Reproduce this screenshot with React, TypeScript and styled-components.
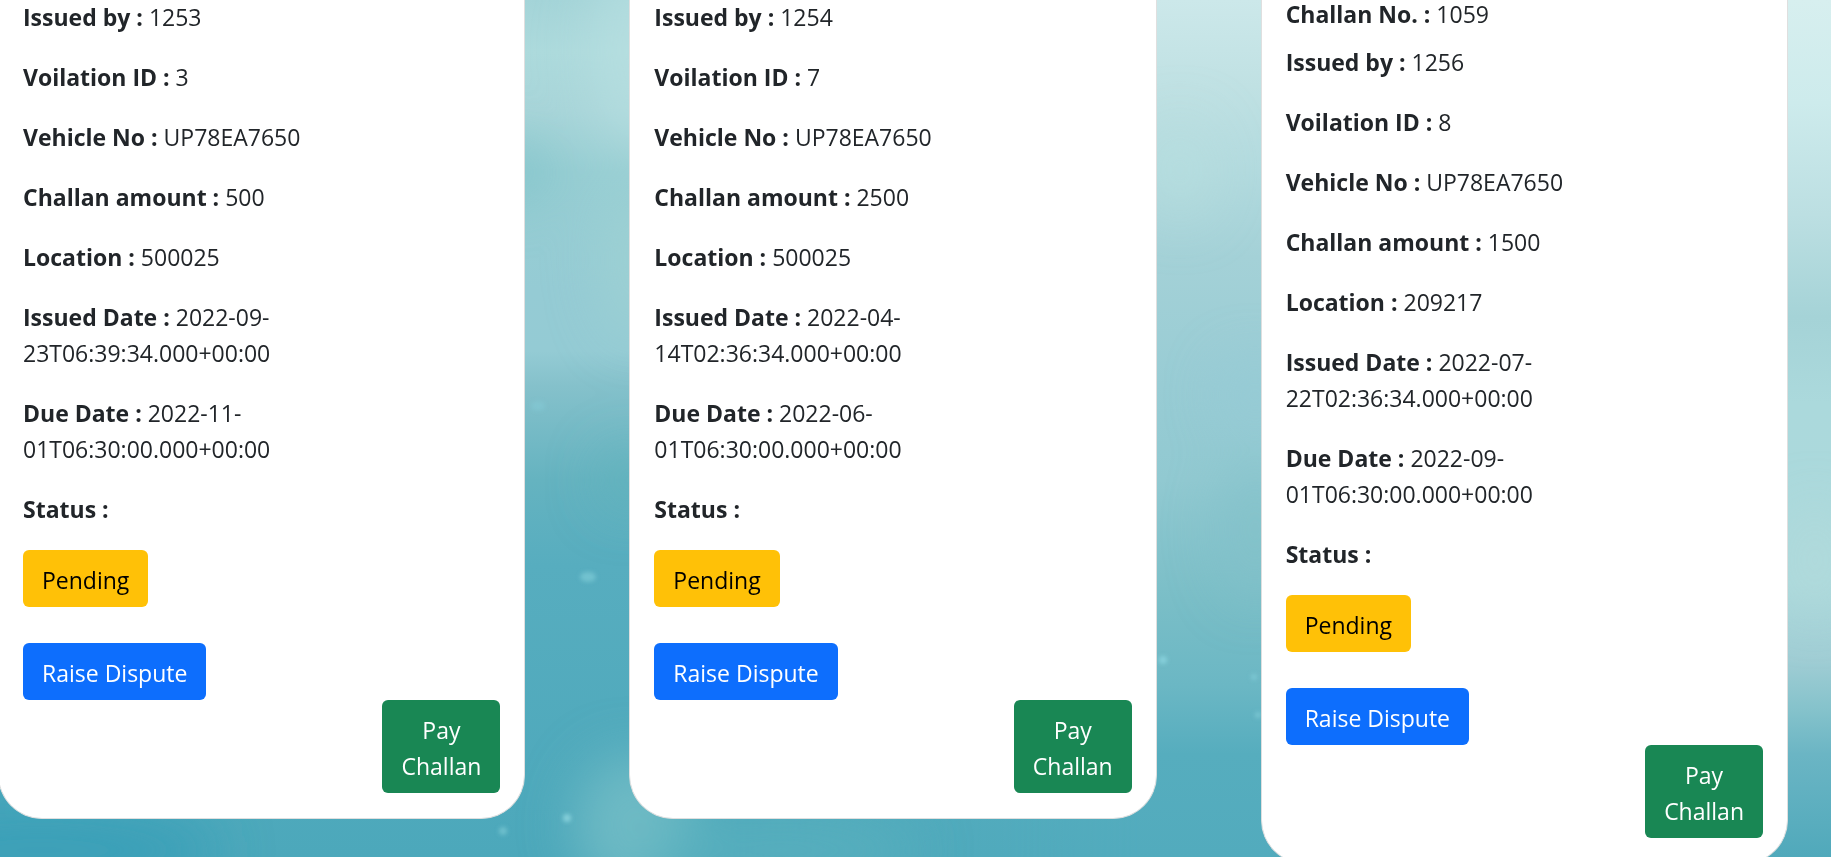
import React from "react";
import styled, { createGlobalStyle } from "styled-components";

const GlobalStyle = createGlobalStyle`
  *, *::before, *::after { box-sizing: border-box; }
  html { background: #52aebf; overflow-x: hidden; }
  body {
    margin: 0;
    overflow: hidden;
    color: #212529;
    font-family: "Segoe UI", "Open Sans", "Noto Sans", sans-serif;
    font-size: 23px;
    line-height: 36px;
  }
`;

const Page = styled.main`
  position: relative;
  min-height: 100vh;
  overflow: hidden;
  isolation: isolate;
`;

const Backdrop = styled.svg`
  position: absolute;
  inset: 0;
  z-index: -1;
  width: 100%;
  height: 100vh;
`;

const CardGrid = styled.div`
  display: grid;
  grid-template-columns: repeat(3, minmax(0, 1fr));
  column-gap: 104px;
  align-items: start;
  margin-left: -2px;
  padding-right: 43px;
`;

const Card = styled.article`
  padding: 0 24px;
  background: #fff;
  border: 1px solid #dfdfdf;
  border-top: 0;
  border-radius: 0 0 44px 44px;
`;

const Heading = styled.h2`
  margin: -4px 0 13px;
  font: inherit;
`;

const Details = styled.dl`
  width: 75%;
  margin: -1px 0 23px;
  display: flex;
  flex-direction: column;
  gap: 24px;
`;

const Field = styled.div``;

const Term = styled.dt`
  display: inline;
  font-weight: 700;
`;

const Label = styled.b`
  font-weight: 700;
`;

const Value = styled.dd`
  display: inline;
  margin: 0;
`;

const Actions = styled.div`
  display: flex;
  flex-direction: column;
  align-items: flex-start;
  gap: 36px;
`;

const Footer = styled.footer`
  display: flex;
  justify-content: flex-end;
  padding-bottom: 25px;
`;

const tones = {
  warning: { background: "#ffc107", color: "#000" },
  primary: { background: "#0d6efd", color: "#fff" },
  success: { background: "#198754", color: "#fff" },
};

const Button = styled.button<{ $tone: keyof typeof tones; $wrap?: boolean }>`
  padding: 12px 19px 9px;
  border: 0;
  border-radius: 6px;
  background: ${(p) => tones[p.$tone].background};
  color: ${(p) => tones[p.$tone].color};
  font: inherit;
  text-align: center;
  cursor: pointer;
  width: ${(p) => (p.$wrap ? "min-content" : "auto")};
`;

type Challan = { number?: string; fields: [string, string][] };

const makeFields = (
  by: string, violation: string, amount: string, location: string, issued: string, due: string
): [string, string][] => [
  ["Issued by :", by],
  ["Voilation ID :", violation],
  ["Vehicle No :", "UP78EA7650"],
  ["Challan amount :", amount],
  ["Location :", location],
  ["Issued Date :", issued],
  ["Due Date :", due],
  ["Status :", ""],
];

const challans: Challan[] = [
  { fields: makeFields("1253", "3", "500", "500025", "2022-09-23T06:39:34.000+00:00", "2022-11-01T06:30:00.000+00:00") },
  { fields: makeFields("1254", "7", "2500", "500025", "2022-04-14T02:36:34.000+00:00", "2022-06-01T06:30:00.000+00:00") },
  { number: "1059", fields: makeFields("1256", "8", "1500", "209217", "2022-07-22T02:36:34.000+00:00", "2022-09-01T06:30:00.000+00:00") },
];

function Water() {
  return (
    <Backdrop viewBox="0 0 1831 857" preserveAspectRatio="none" aria-hidden="true">
      <defs>
        <linearGradient id="left" x1="0" y1="0" x2="0" y2="1">
          <stop offset="0" stopColor="#a4d4d8" />
          <stop offset="0.06" stopColor="#addadc" />
          <stop offset="0.13" stopColor="#a8d5d9" />
          <stop offset="0.2" stopColor="#97ced3" />
          <stop offset="0.34" stopColor="#95cbd4" />
          <stop offset="0.41" stopColor="#94cbd4" />
          <stop offset="0.45" stopColor="#85c1cb" />
          <stop offset="0.56" stopColor="#65b3c0" />
          <stop offset="0.66" stopColor="#57adbf" />
          <stop offset="1" stopColor="#4ca8bb" />
        </linearGradient>
        <linearGradient id="middle" x1="0" y1="0" x2="0" y2="1">
          <stop offset="0" stopColor="#cce8ea" />
          <stop offset="0.1" stopColor="#c0e1e3" />
          <stop offset="0.2" stopColor="#b2dade" />
          <stop offset="0.3" stopColor="#a4d1d7" />
          <stop offset="0.45" stopColor="#98ccd4" />
          <stop offset="0.56" stopColor="#91c9d1" />
          <stop offset="0.7" stopColor="#7abec7" />
          <stop offset="0.8" stopColor="#6bb7c4" />
          <stop offset="0.88" stopColor="#56adbe" />
          <stop offset="1" stopColor="#52abbd" />
        </linearGradient>
        <linearGradient id="right" x1="0" y1="0" x2="0" y2="1">
          <stop offset="0" stopColor="#d7efef" />
          <stop offset="0.12" stopColor="#cdebec" />
          <stop offset="0.25" stopColor="#bcdfe2" />
          <stop offset="0.37" stopColor="#a5d3d7" />
          <stop offset="0.47" stopColor="#abd9dc" />
          <stop offset="0.68" stopColor="#acd9dc" />
          <stop offset="0.77" stopColor="#a0cdd4" />
          <stop offset="0.83" stopColor="#84c2cb" />
          <stop offset="0.88" stopColor="#6bb5c4" />
          <stop offset="1" stopColor="#50a9bb" />
        </linearGradient>
        <linearGradient id="fadeIn" x1="0" y1="0" x2="1" y2="0">
          <stop offset="0" stopColor="#000" />
          <stop offset="1" stopColor="#fff" />
        </linearGradient>
        <mask id="toMiddle"><rect x="640" width="500" height="857" fill="url(#fadeIn)" /><rect x="1140" width="691" height="857" fill="#fff" /></mask>
        <mask id="toRight"><rect x="1270" width="510" height="857" fill="url(#fadeIn)" /><rect x="1780" width="51" height="857" fill="#fff" /></mask>
        <filter id="haze" filterUnits="userSpaceOnUse" x="-100" y="-100" width="2031" height="1057"><feGaussianBlur stdDeviation="26" /></filter>
        <filter id="spark" x="-100%" y="-100%" width="300%" height="300%"><feGaussianBlur stdDeviation="2" /></filter>
      </defs>
      <rect width="1831" height="857" fill="url(#left)" />
      <rect width="1831" height="857" fill="url(#middle)" mask="url(#toMiddle)" />
      <rect width="1831" height="857" fill="url(#right)" mask="url(#toRight)" />
      <g filter="url(#haze)">
        <ellipse cx="40" cy="850" rx="180" ry="50" fill="#389fb8" opacity="0.8" />
        <ellipse cx="635" cy="825" rx="60" ry="70" fill="#72bcc5" opacity="0.9" />
        <ellipse cx="780" cy="850" rx="140" ry="40" fill="#58b0bd" opacity="0.7" />
        <ellipse cx="640" cy="50" rx="50" ry="100" fill="#b8dfe1" opacity="0.7" />
        <ellipse cx="515" cy="172" rx="35" ry="30" fill="#7cc1c8" opacity="0.7" />
        <ellipse cx="635" cy="260" rx="35" ry="80" fill="#9fd1d3" opacity="0.8" />
        <ellipse cx="630" cy="480" rx="30" ry="30" fill="#5fb2bb" opacity="0.7" />
        <ellipse cx="1180" cy="170" rx="35" ry="50" fill="#b8e0df" opacity="0.6" />
        <ellipse cx="1255" cy="395" rx="35" ry="35" fill="#96cad6" opacity="0.8" />
        <ellipse cx="1255" cy="530" rx="35" ry="70" fill="#82c1c9" opacity="0.7" />
        <ellipse cx="1815" cy="560" rx="25" ry="55" fill="#b3dcdc" opacity="0.7" />
      </g>
      <g filter="url(#spark)" fill="#86d0db">
        <ellipse cx="588" cy="577" rx="8" ry="5" opacity="0.6" />
        <ellipse cx="538" cy="406" rx="7" ry="5" opacity="0.4" />
        <circle cx="567" cy="818" r="4" />
        <circle cx="503" cy="831" r="4" opacity="0.6" />
        <circle cx="1163" cy="660" r="4" />
        <circle cx="1254" cy="677" r="3" opacity="0.7" />
        <circle cx="1258" cy="715" r="3" opacity="0.7" />
      </g>
    </Backdrop>
  );
}

export default function App() {
  return (
    <Page>
      <GlobalStyle />
      <Water />
      <CardGrid>
        {challans.map((challan, i) => (
          <Card key={i}>
            {challan.number && (
              <Heading><Label>Challan No. :</Label> {challan.number}</Heading>
            )}
            <Details>
              {challan.fields.map(([term, value]) => (
                <Field key={term}><Term>{term}</Term> <Value>{value}</Value></Field>
              ))}
            </Details>
            <Actions>
              <Button type="button" $tone="warning">Pending</Button>
              <Button type="button" $tone="primary">Raise Dispute</Button>
            </Actions>
            <Footer>
              <Button type="button" $tone="success" $wrap>Pay Challan</Button>
            </Footer>
          </Card>
        ))}
      </CardGrid>
    </Page>
  );
}
